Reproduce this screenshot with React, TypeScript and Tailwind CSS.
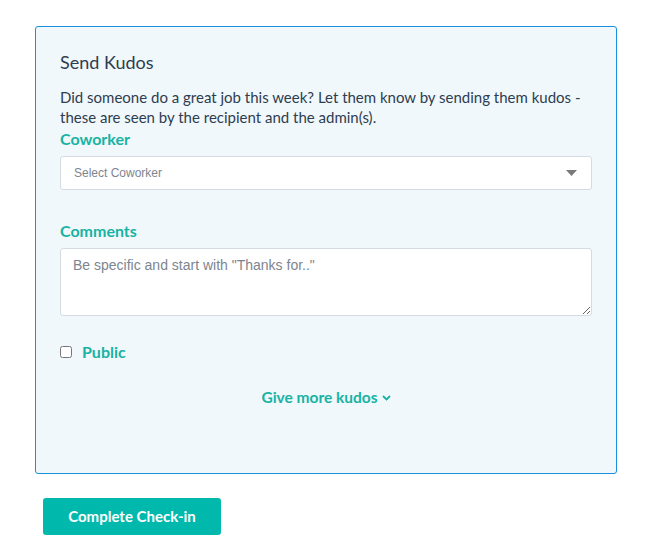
import React from "react";

export default function App() {
  return (
    <div className="min-h-screen bg-white font-['Lato','Open_Sans',sans-serif] text-[#2e3d4f]">
      <div className="pl-[35px] pr-[37px] pt-[26px]">
        {/* Kudos panel */}
        <div className="h-[448px] rounded-[3px] border border-[#1a8fdd] bg-[#f1f8fc] px-[24px] pt-[24px]">
          <h2 className="text-[18px] leading-[22px]">Send Kudos</h2>
          <p className="mt-[14px] text-[15px] leading-[20px]">
            Did someone do a great job this week? Let them know by sending them kudos - these are seen by the recipient and the admin(s).
          </p>

          <label className="mt-[2px] block text-[16px] font-bold leading-[20px] text-[#17b3a3]">Coworker</label>
          <div className="mt-[7px] flex h-[34px] items-center justify-between rounded-[3px] border border-[#d5dbe0] bg-white pl-[13px] pr-[14px]">
            <span className="font-['Liberation_Sans',Arial,sans-serif] text-[12px] text-[#7d8590]">Select Coworker</span>
            <svg width="11" height="6" viewBox="0 0 11 6">
              <path d="M0 0h11L5.5 6z" fill="#7a7a7a" />
            </svg>
          </div>

          <label className="mt-[31px] block text-[16px] font-bold leading-[20px] text-[#17b3a3]">Comments</label>
          <textarea
            className="mt-[7px] block h-[68px] w-full rounded-[3px] border border-[#d5dbe0] bg-white px-[12px] py-[6px] font-['Liberation_Sans',Arial,sans-serif] text-[14px] placeholder:text-[#7d8590] outline-none"
            placeholder={'Be specific and start with "Thanks for.."'}
          />

          <div className="mt-[26px] flex items-center gap-[10px]">
            <input type="checkbox" className="h-[12px] w-[12px] rounded-[2px]" />
            <span className="text-[16px] font-bold leading-[20px] text-[#17b3a3]">Public</span>
          </div>

          <div className="mt-[24px] flex justify-center">
            <button className="flex items-center gap-[4px] text-[15.5px] font-bold text-[#17b3a3]">
              Give more kudos
              <svg width="9" height="6" viewBox="0 0 9 6">
                <path d="M1 1l3.5 3.5L8 1" stroke="#17b3a3" strokeWidth="1.8" fill="none" />
              </svg>
            </button>
          </div>
        </div>

        <button className="ml-[8px] mt-[24px] h-[37px] w-[178px] rounded-[3px] bg-[#00b9ac] text-[15px] font-bold text-white">
          Complete Check-in
        </button>
      </div>
    </div>
  );
}
